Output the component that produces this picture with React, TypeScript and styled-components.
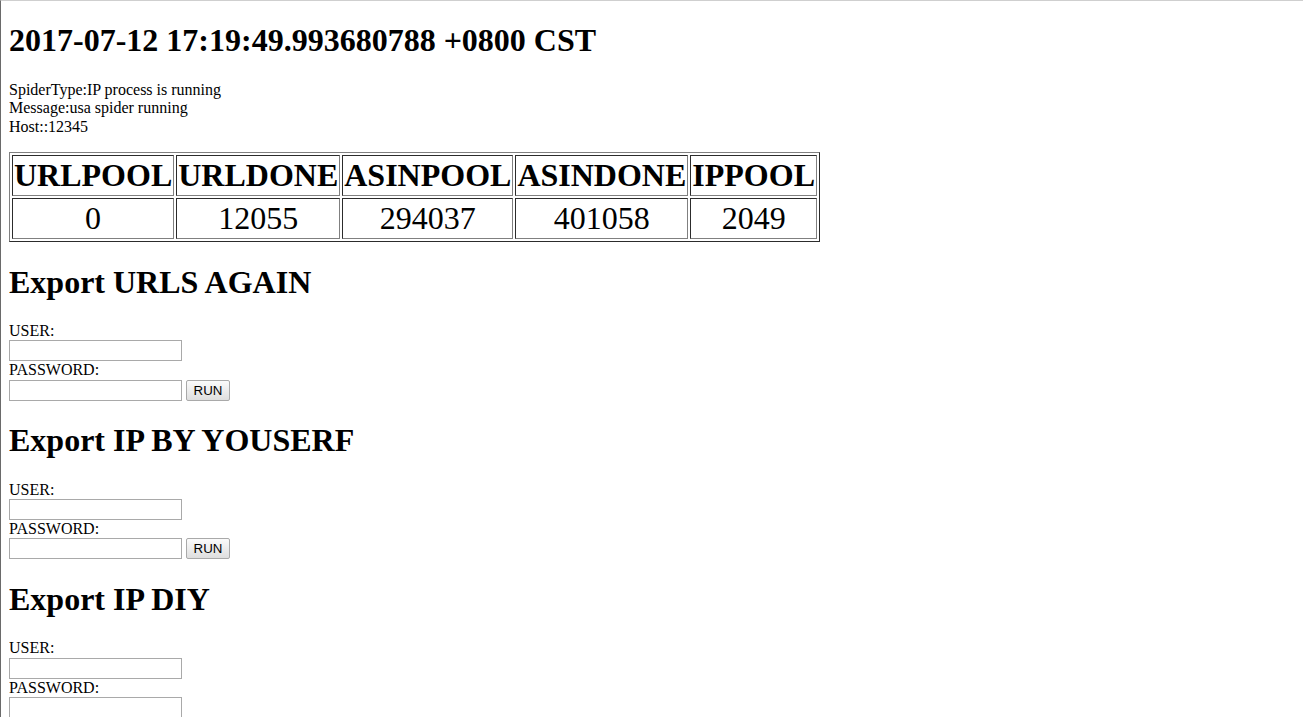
import React from "react";
import styled, { createGlobalStyle } from "styled-components";

const Global = createGlobalStyle`
  html {
    border-top: 1px solid #cfcfcf;
    border-left: 1px solid #6a6a6a;
    min-height: 100vh;
    box-sizing: border-box;
    background: #fff;
  }
  body {
    margin: 0 8px 8px 8px;
    font-family: "Liberation Serif", "Times New Roman", serif;
    font-size: 16px;
    color: #000;
  }
`;

const Heading = styled.h1`
  font-size: 32px;
  font-weight: bold;
  line-height: 37px;
  margin: 21.44px 0;
`;

const Info = styled.p`
  line-height: 18.4px;
  margin: 0;
`;

const StatsTable = styled.table`
  margin-top: 16px;
  border: 1px outset #808080;
  border-spacing: 2px;
`;

const Th = styled.th`
  border: 1px inset #808080;
  padding: 1px;
  font-size: 32px;
  font-weight: bold;
  line-height: 37px;
`;

const Td = styled.td`
  border: 1px inset #808080;
  padding: 1px;
  font-size: 32px;
  line-height: 37px;
  text-align: center;
`;

const Form = styled.form`
  margin: 0;
`;

const Label = styled.div`
  line-height: 18.4px;
  height: 18.4px;
`;

const Row = styled.div`
  display: flex;
  align-items: center;
  gap: 4px;
  height: 21px;
`;

const Input = styled.input`
  box-sizing: border-box;
  width: 173px;
  height: 21px;
  margin: 0;
  border: 1px solid #a9a9a9;
  padding: 1px 2px;
  font-family: "Liberation Sans", Arial, sans-serif;
  font-size: 13.33px;
`;

const RunButton = styled.button`
  box-sizing: border-box;
  width: 44px;
  height: 21px;
  margin: 0;
  padding: 1px 6px;
  border: 1px solid #a9a9a9;
  border-radius: 2px;
  background: linear-gradient(#fbfbfb, #dedede);
  font-family: "Liberation Sans", Arial, sans-serif;
  font-size: 13.33px;
  color: #000;
`;

const stats = [
  ["URLPOOL", "0"],
  ["URLDONE", "12055"],
  ["ASINPOOL", "294037"],
  ["ASINDONE", "401058"],
  ["IPPOOL", "2049"],
];

const sections = [
  { title: "Export URLS AGAIN", button: true },
  { title: "Export IP BY YOUSERF", button: true },
  { title: "Export IP DIY", button: false },
];

export default function App() {
  return (
    <>
      <Global />
      <Heading>2017-07-12 17:19:49.993680788 +0800 CST</Heading>
      <Info>
        SpiderType:IP process is running
        <br />
        Message:usa spider running
        <br />
        Host::12345
      </Info>
      <StatsTable>
        <tbody>
          <tr>
            {stats.map(([k]) => (
              <Th key={k}>{k}</Th>
            ))}
          </tr>
          <tr>
            {stats.map(([k, v]) => (
              <Td key={k}>{v}</Td>
            ))}
          </tr>
        </tbody>
      </StatsTable>
      {sections.map((s) => (
        <Form key={s.title} onSubmit={(e) => e.preventDefault()}>
          <Heading>{s.title}</Heading>
          <Label>USER:</Label>
          <Row>
            <Input type="text" />
          </Row>
          <Label>PASSWORD:</Label>
          <Row>
            <Input type="password" />
            {s.button && <RunButton type="submit">RUN</RunButton>}
          </Row>
        </Form>
      ))}
    </>
  );
}
